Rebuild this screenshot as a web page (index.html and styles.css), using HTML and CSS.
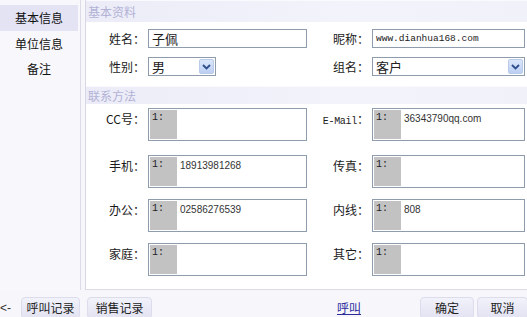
FILE: index.html
```html
<!DOCTYPE html>
<html lang="zh">
<head>
<meta charset="utf-8">
<title>联系人</title>
<link rel="stylesheet" href="styles.css">
</head>
<body>
<div class="app">
  <nav class="sidebar">
    <div class="nav-item active">基本信息</div>
    <div class="nav-item">单位信息</div>
    <div class="nav-item">备注</div>
  </nav>
  <main class="main">
    <div class="section-title">基本资料</div>
    <div class="basic-grid">
      <label class="lbl">姓名：</label>
      <div class="input cjk">子佩</div>
      <label class="lbl">昵称：</label>
      <div class="input mono">www.dianhua168.com</div>

      <label class="lbl">性别：</label>
      <div class="select short"><span class="sel-val">男</span><span class="sel-btn"><svg width="9" height="6" viewBox="0 0 9 6"><path d="M1 1 L4.5 4.5 L8 1" fill="none" stroke="#2d4d8c" stroke-width="1.8"/></svg></span></div>
      <label class="lbl">组名：</label>
      <div class="select"><span class="sel-val">客户</span><span class="sel-btn"><svg width="9" height="6" viewBox="0 0 9 6"><path d="M1 1 L4.5 4.5 L8 1" fill="none" stroke="#2d4d8c" stroke-width="1.8"/></svg></span></div>
    </div>
    <div class="section-title second">联系方法</div>
    <div class="contact-grid">
      <label class="lbl top">CC号：</label>
      <div class="multi"><span class="idx">1:</span><span class="val"></span></div>
      <label class="lbl top"><span class="mono-lbl">E-Mail</span>：</label>
      <div class="multi"><span class="idx">1:</span><span class="val">36343790qq.com</span></div>

      <label class="lbl top">手机：</label>
      <div class="multi"><span class="idx">1:</span><span class="val">18913981268</span></div>
      <label class="lbl top">传真：</label>
      <div class="multi"><span class="idx">1:</span><span class="val"></span></div>

      <label class="lbl top">办公：</label>
      <div class="multi"><span class="idx">1:</span><span class="val">02586276539</span></div>
      <label class="lbl top">内线：</label>
      <div class="multi"><span class="idx">1:</span><span class="val">808</span></div>

      <label class="lbl top">家庭：</label>
      <div class="multi"><span class="idx">1:</span><span class="val"></span></div>
      <label class="lbl top">其它：</label>
      <div class="multi"><span class="idx">1:</span><span class="val"></span></div>
    </div>
  </main>
  <footer class="footer">
    <span class="back">&lt;-</span>
    <button class="btn w59">呼叫记录</button>
    <button class="btn w65">销售记录</button>
    <a class="call-link" href="#">呼叫</a>
    <button class="btn w54">确定</button>
    <button class="btn w52">取消</button>
  </footer>
</div>
</body>
</html>
```
FILE: styles.css
```css
* { box-sizing: border-box; }
html, body { margin: 0; padding: 0; }
body {
  width: 527px;
  height: 317px;
  overflow: hidden;
  background: #f6f6fb;
  font-family: "Noto Sans CJK SC", "DejaVu Sans", sans-serif;
  font-size: 12px;
  color: #222;
}
.app {
  display: grid;
  grid-template-columns: 81px 1fr;
  grid-template-rows: 290px 27px;
  width: 527px;
  height: 317px;
  overflow: hidden;
}
.sidebar {
  border-right: 1px solid #dcdce6;
  padding-top: 5px;
  background: #f7f7fc;
}
.nav-item {
  height: 25px;
  line-height: 25px;
  text-align: center;
  width: 78px;
  font-size: 12px;
  color: #111;
}
.nav-item.active {
  background: #e3e3f4;
  height: 26px;
}
.main {
  margin-left: 4px;
  border-left: 1px solid #d8d8e4;
  border-bottom: 1px solid #dcdce6;
  background: #ffffff;
  display: flex;
  flex-direction: column;
}
.section-title {
  height: 22px;
  line-height: 22px;
  padding-left: 2px;
  font-size: 12px;
  color: #b2b2d6;
  background: linear-gradient(to right, #ececf8, #f3f3fb 60%, #f1f1fa);
  border-top: 1px solid #f9f9fe;
}
.section-title.second {
  height: 18px;
  line-height: 18px;
  margin-top: 10px;
}
.basic-grid {
  display: grid;
  grid-template-columns: 62px 159px 65px 153px;
  grid-template-rows: 19px 19px;
  row-gap: 9px;
  padding-top: 7px;
  align-items: center;
}
.lbl {
  text-align: right;
  padding-right: 3px;
  font-size: 12px;
  color: #1a1a1a;
  white-space: nowrap;
}
.lbl.top {
  align-self: start;
  padding-top: 2px;
}
.mono-lbl {
  font-family: "Liberation Mono", "DejaVu Sans Mono", monospace;
  font-size: 10px;
  letter-spacing: -0.3px;
}
.input {
  height: 19px;
  border: 1px solid #8f9cad;
  background: #fff;
  padding-left: 3px;
  line-height: 17px;
  white-space: nowrap;
  overflow: hidden;
}
.input.cjk { font-size: 13px; }
.input.mono {
  font-family: "Liberation Mono", "DejaVu Sans Mono", monospace;
  font-size: 9.5px;
  line-height: 17px;
}
.select {
  height: 19px;
  border: 1px solid #8f9cad;
  background: #fff;
  display: flex;
  align-items: stretch;
  justify-content: space-between;
}
.select.short { width: 68px; }
.sel-val {
  padding-left: 3px;
  line-height: 17px;
  font-size: 13px;
}
.sel-btn {
  width: 15px;
  margin: 1px;
  border: 1px solid #b9cbe9;
  border-radius: 2px;
  background: linear-gradient(#dbe6fa, #bccff3);
  display: flex;
  align-items: center;
  justify-content: center;
}
.contact-grid {
  display: grid;
  grid-template-columns: 62px 159px 65px 153px;
  grid-template-rows: 47px 44px 44px 44px;
  padding-top: 4px;
}
.multi {
  height: 33px;
  border: 1px solid #8f9cad;
  background: #fff;
  padding: 1px;
  display: flex;
  font-family: "Liberation Sans", Arial, sans-serif;
  font-size: 10px;
  color: #333;
}
.idx {
  width: 27px;
  background: #c2c2c2;
  padding: 2px 0 0 2px;
  font-family: "Liberation Mono", monospace;
  font-size: 10px;
  color: #222;
}
.val {
  padding: 3px 0 0 3px;
  white-space: nowrap;
}
.footer {
  grid-column: 1 / 3;
  display: flex;
  align-items: flex-start;
  padding-top: 7px;
  background: #f6f6fb;
  overflow: hidden;
}
.back {
  flex: none;
  width: 21px;
  padding-top: 4px;
  font-family: "Liberation Sans", Arial, sans-serif;
  font-size: 12px;
  color: #333;
}
.btn {
  flex: none;
  height: 22px;
  border: 1px solid #dcdcec;
  border-radius: 4px;
  background: linear-gradient(#f2f2fb, #e2e2f2);
  font-family: "Noto Sans CJK SC", sans-serif;
  font-size: 12px;
  color: #222;
  padding: 0;
  line-height: 20px;
}
.w59 { width: 59px; }
.w65 { width: 65px; margin-left: 7px; }
.w54 { width: 54px; }
.w52 { width: 51px; margin-left: 3px; }
.call-link {
  flex: none;
  width: 22px;
  margin-left: 185px;
  margin-right: 61px;
  padding-top: 2px;
  font-size: 12px;
  white-space: nowrap;
  color: #2b2b9c;
  text-decoration: underline;
}
```
